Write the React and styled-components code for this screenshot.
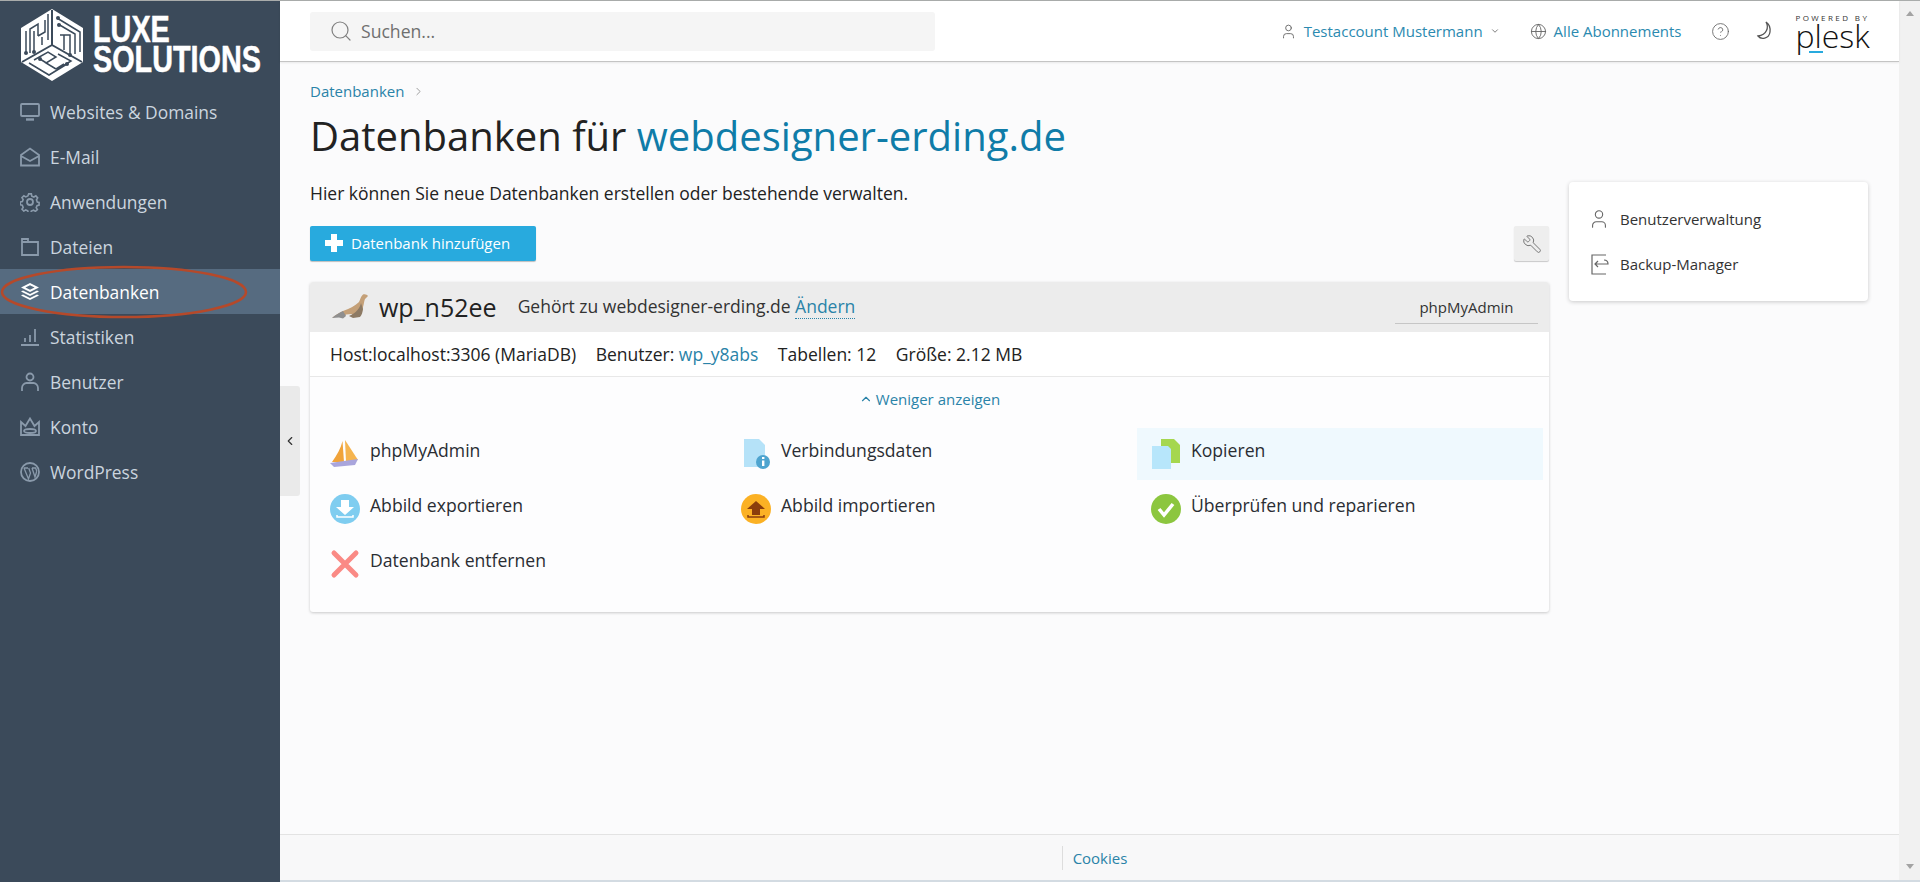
import { createGlobalStyle, styled } from 'styled-components'
import {
  ChevronDown,
  ChevronLeft,
  ChevronRight,
  ChevronUp,
  CircleHelp,
  Globe,
  Search,
  User,
  Wrench,
} from 'lucide-react'

const GlobalStyle = createGlobalStyle`
  html, body {
    margin: 0;
    height: 100%;
    overflow: hidden;
  }
  body {
    font-family: "Open Sans", "Noto Sans", sans-serif;
    color: #222;
    background: #fbfbfc;
  }
  * { box-sizing: border-box; }
`
const Page = styled.div`
  position: relative;
  display: flex;
  height: 882px;
  border-top: 1px solid #a9acab;
`
const Sidebar = styled.aside`
  width: 280px;
  flex: none;
  background: #3b4a5a;
  display: flex;
  flex-direction: column;
`
const LogoRow = styled.div`
  height: 88px;
  display: flex;
  align-items: center;
  gap: 9px;
  padding-left: 20px;
  color: #fff;
  svg {
    flex: none;
  }
`
const LogoWords = styled.div`
  font-family: "Liberation Sans", sans-serif;
  font-weight: 700;
  font-size: 36px;
  line-height: 30.5px;
  white-space: nowrap;
  transform: scaleX(0.8);
  transform-origin: left center;
  -webkit-text-stroke: 0.5px #fff;
`
const NavItem = styled.div`
  height: 45px;
  display: flex;
  align-items: center;
  gap: 10px;
  padding-left: 20px;
  font-size: 17.4px;
  color: ${(p) => (p.$active ? '#fff' : '#cbd5df')};
  background: ${(p) => (p.$active ? '#566b80' : 'transparent')};
  svg {
    color: ${(p) => (p.$active ? '#fff' : '#8a9aab')};
    flex: none;
  }
`
const Annotation = styled.svg`
  position: absolute;
  left: 0;
  top: 260px;
  pointer-events: none;
`
const Main = styled.div`
  flex: 1;
  min-width: 0;
  display: flex;
  flex-direction: column;
  position: relative;
`
const Header = styled.header`
  height: 61px;
  flex: none;
  background: #fff;
  border-bottom: 1px solid #c4c4c4;
  box-shadow: 0 1px 2px rgba(0, 0, 0, 0.08);
  display: flex;
  align-items: center;
  padding-left: 30px;
`
const SearchBox = styled.div`
  width: 625px;
  height: 39px;
  background: #f5f5f5;
  border-radius: 3px;
  display: flex;
  align-items: center;
  gap: 8px;
  padding-left: 19px;
  font-size: 17.6px;
  color: #6f6f6f;
  svg {
    color: #808080;
    flex: none;
  }
`
const HeaderRight = styled.div`
  margin-left: auto;
  display: flex;
  align-items: center;
  font-size: 15px;
  color: #2b8ab0;
  svg {
    color: #666;
    flex: none;
  }
`
const HeaderLink = styled.div`
  display: flex;
  align-items: center;
  gap: ${(p) => p.$gap || 7}px;
  margin-right: ${(p) => p.$after || 0}px;
`
const PleskBrand = styled.div`
  width: 74px;
  margin: 0 29.5px 0 22px;
  color: #111;
  display: flex;
  flex-direction: column;
  align-items: flex-start;
`
const PoweredBy = styled.span`
  font-size: 8px;
  line-height: 9px;
  letter-spacing: 2.4px;
  white-space: nowrap;
  color: #333;
`
const PleskWord = styled.span`
  position: relative;
  font-size: 32px;
  line-height: 29px;
  font-weight: 300;
  margin-top: -1px;
  &::after {
    content: '';
    position: absolute;
    left: 13px;
    bottom: -3px;
    width: 14px;
    height: 2px;
    background: #28aade;
  }
`
const Content = styled.main`
  flex: 1;
  display: flex;
  gap: 20px;
  padding: 0 30px 0 30px;
`
const ContentColumn = styled.div`
  width: 1239px;
  flex: none;
`
const Breadcrumb = styled.div`
  display: flex;
  align-items: center;
  gap: 8px;
  height: 20px;
  margin-top: 19px;
  font-size: 15px;
  color: #2a83a8;
  svg {
    color: #777;
  }
`
const Title = styled.h1`
  margin: 8.5px 0 0;
  font-size: 40px;
  line-height: 52px;
  font-weight: 400;
  color: #222;
`
const TitleLink = styled.span`
  color: #0f7ca8;
`
const Intro = styled.p`
  margin: 20.5px 0 0;
  font-size: 17.5px;
  line-height: 22px;
  color: #222;
`
const Toolbar = styled.div`
  display: flex;
  justify-content: space-between;
  margin-top: 22px;
`
const AddButton = styled.div`
  width: 226px;
  height: 35px;
  background: #28aade;
  border-radius: 2px;
  box-shadow: 0 1px 1px rgba(0, 0, 0, 0.25);
  display: flex;
  align-items: center;
  gap: 8px;
  padding: 0 0 1px 15px;
  color: #fff;
  font-size: 15px;
`
const ToolButton = styled.div`
  width: 35px;
  height: 35px;
  background: #eee;
  border-radius: 2px;
  box-shadow: 0 1px 1px rgba(0, 0, 0, 0.2);
  display: flex;
  align-items: center;
  justify-content: center;
  svg {
    color: #777;
    transform: scaleX(-1);
  }
`
const Card = styled.section`
  margin-top: 21px;
  height: 330px;
  background: #fdfdfe;
  border-radius: 3px;
  box-shadow: 0 1px 3px rgba(0, 0, 0, 0.2);
  overflow: hidden;
`
const CardHead = styled.div`
  height: 50px;
  background: #ececec;
  display: flex;
  align-items: center;
  padding-left: 22px;
`
const DbName = styled.span`
  margin-left: 11px;
  font-size: 25px;
  color: #222;
`
const Owner = styled.span`
  margin: 0 0 2px 21px;
  font-size: 17.5px;
  color: #333;
`
const ChangeLink = styled.span`
  color: #2a83a8;
  border-bottom: 1px dotted #2a83a8;
`
const AdminButton = styled.div`
  width: 143px;
  height: 33px;
  margin-left: auto;
  margin-right: 11px;
  border-bottom: 1px solid #c6c6c6;
  display: flex;
  align-items: center;
  justify-content: center;
  font-size: 15px;
  color: #333;
`
const InfoRow = styled.div`
  height: 45px;
  background: #fff;
  border-bottom: 1px solid #e8e8e8;
  display: flex;
  align-items: center;
  gap: 19.5px;
  padding-left: 20px;
  font-size: 17.5px;
  color: #222;
`
const InfoLink = styled.span`
  color: #2a83a8;
`
const ToggleRow = styled.div`
  height: 43px;
  display: flex;
  align-items: center;
  justify-content: center;
  gap: 3px;
  font-size: 15px;
  color: #2a83a8;
`
const ActionGrid = styled.div`
  display: grid;
  grid-template-columns: 411px 410px 406px;
  grid-auto-rows: 52px;
  row-gap: 3px;
  padding: 8px 0 0 6px;
`
const Action = styled.div`
  display: flex;
  align-items: center;
  gap: 10px;
  padding-left: 14px;
  background: ${(p) => (p.$hot ? '#eff9fe' : 'transparent')};
`
const ActionLabel = styled.span`
  margin-bottom: 8px;
  font-size: 17.6px;
  color: #2a2d33;
`
const ActionIcon = styled.svg`
  width: 30px;
  height: 30px;
  flex: none;
`
const SidePanel = styled.aside`
  width: 299px;
  height: 119px;
  margin-top: 120px;
  background: #fff;
  border-radius: 4px;
  box-shadow: 0 1px 4px rgba(0, 0, 0, 0.2);
  padding: 14px 19px;
`
const PanelLink = styled.div`
  height: 45px;
  display: flex;
  align-items: center;
  gap: 10px;
  font-size: 15px;
  color: #333;
  svg {
    color: #666;
    flex: none;
  }
`
const Footer = styled.footer`
  height: 48px;
  flex: none;
  background: #f8f8f9;
  border-top: 1px solid #e3e3e3;
  border-bottom: 2px solid #d3dbe2;
  display: flex;
  justify-content: center;
  align-items: center;
  font-size: 15px;
  color: #2a83a8;
`
const FooterLink = styled.span`
  border-left: 1px solid #ddd;
  line-height: 24px;
  padding-left: 10px;
  margin-left: 10px;
`
const Collapser = styled.div`
  position: absolute;
  left: 0;
  top: 385px;
  width: 20px;
  height: 110px;
  background: #eaeaea;
  border-radius: 0 3px 3px 0;
  display: flex;
  align-items: center;
  justify-content: center;
  svg {
    color: #333;
  }
`
const Scrollbar = styled.div`
  width: 21px;
  flex: none;
  background: #f1f1f1;
  border-bottom: 2px solid #d3dbe2;
  display: flex;
  flex-direction: column;
  justify-content: space-between;
  align-items: center;
  padding: 10px 0 11px;
`
const ScrollArrow = styled.div`
  width: 0;
  height: 0;
  border-left: 4px solid transparent;
  border-right: 4px solid transparent;
  border-bottom: ${(p) => (p.$down ? '0' : '5px solid #a3a3a3')};
  border-top: ${(p) => (p.$down ? '5px solid #a3a3a3' : '0')};
`

function NavIcon({ children }) {
  return (
    <svg width="20" height="20" viewBox="0 0 20 20" fill="none" stroke="currentColor" strokeWidth="1.800">
      {children}
    </svg>
  )
}

const navItems = [
  {
    label: 'Websites & Domains',
    icon: (
      <>
        <rect x="1" y="2" width="18" height="12" rx="1" />
        <path d="M6 17.500h8" strokeWidth="2.400" />
      </>
    ),
  },
  {
    label: 'E-Mail',
    icon: (
      <>
        <path d="M1 8l9-6.500 9 6.500v10.500h-18z" />
        <path d="M1 9l9 5 9-5" />
      </>
    ),
  },
  {
    label: 'Anwendungen',
    icon: (
      <>
        <circle cx="10" cy="10" r="3" />
        <path d="M8.500 1h3l.5 2.500 2.300 1 2.200-1.300 2 2.200-1.300 2.100.9 2.500 2 .5v3l-2.300.5-.9 2.300 1.300 2.100-2.200 2-2-1.300-2.500.9-.5 2h-3l-.5-2.200-2.300-1-2.100 1.300-2-2.100 1.300-2.100-1-2.300-2.200-.6v-3l2.300-.5.9-2.300-1.300-2.100 2.100-2.100 2.100 1.300 2.300-1z" transform="translate(1 1) scale(.9)" />
      </>
    ),
  },
  {
    label: 'Dateien',
    icon: <path d="M2 2h6v3h10v13h-16zM8 5h-6" />,
  },
  {
    label: 'Datenbanken',
    active: true,
    icon: (
      <g stroke="none" fill="currentColor">
        <path d="M10 1l9 4.500-9 4.500-9-4.500zM10 3.200l-4.600 2.300 4.600 2.300 4.600-2.300z" fillRule="evenodd" />
        <path d="M3 8.500l7 3.500 7-3.500 2 1-9 4.500-9-4.500z" />
        <path d="M3 12.500l7 3.500 7-3.500 2 1-9 4.500-9-4.500z" />
      </g>
    ),
  },
  {
    label: 'Statistiken',
    icon: <path d="M1 18h18M5 15v-4M10 15v-7M15 15v-13" />,
  },
  {
    label: 'Benutzer',
    icon: (
      <>
        <circle cx="10" cy="5" r="3.500" />
        <path d="M2 19v-3c0-3 2.500-5 4.500-5h7c2 0 4.500 2 4.500 5v3" />
      </>
    ),
  },
  {
    label: 'Konto',
    icon: (
      <>
        <path d="M1 5l4.500 4 4.500-7.500 4.500 7.500 4.500-4v13h-18z" />
        <ellipse cx="10" cy="14" rx="6" ry="2" />
      </>
    ),
  },
  {
    label: 'WordPress',
    icon: (
      <>
        <circle cx="10" cy="10" r="9" />
        <path d="M4 6l4.500 11 2-6-1.800-5M8 6h-4M12 6l3 9 1.500-5c.5-2-.5-3-1-4h-3.500" strokeWidth="1.300" />
      </>
    ),
  },
]

function LogoMark() {
  return (
    <svg width="64" height="72" viewBox="0 0 64 72" aria-hidden="true">
      <path d="M32 0l31 19v34l-31 19-31-19v-34z" fill="#fff" />
      <g fill="none" stroke="#3b4a5a" strokeWidth="1.500">
        <path d="M32 1v35M32 36l-30 17M32 36l30 17" strokeWidth="2" />
        <path d="M6 22v22M10 44v-24l8-5v12M14 42v-20M18 27l7-4v-12M22 36v-8M28 5v26" />
        <path d="M37 9l23 14v20M38 15l17 10v20M40 26h10v6M44 26v15M50 32v14" />
        <path d="M14 51l14-8 8 5-10 6 10 6M9 54l20 12 18-11M38 45l13 7-8 5M20 50l8 5M36 60l8-5" />
      </g>
      <g fill="#3b4a5a">
        <circle cx="6" cy="44" r="2" />
        <circle cx="14" cy="43" r="2" />
        <circle cx="38" cy="9" r="2" />
        <circle cx="39" cy="16" r="2" />
        <circle cx="50" cy="46" r="2" />
        <circle cx="20" cy="50" r="2" />
        <circle cx="47" cy="55" r="2" />
      </g>
    </svg>
  )
}

function SealIcon() {
  return (
    <svg width="36" height="26" viewBox="0 0 36 26" aria-hidden="true">
      <path d="M0 24c3-3 7-5 11-7 6-2 12-5 16-9 1-2 2-6 4-7.500 2-.8 4 0 5 1.500l-3 3c-1 2-1 5-2 8-.5 3-1 6-3 8l-7 1-1-2-6 .5-1 1.500-3-1.500z" fill="#c4a078" />
      <path d="M0 24c3-3 7-5 11-7l3 5-3 2.500-4-1z" fill="#8f8f8f" />
      <path d="M29 9c-1 5-5 10-12 13l4 2 7-1c2-2 2.500-5 3-8z" fill="#8d7a64" />
    </svg>
  )
}

function PmaIcon() {
  return (
    <ActionIcon viewBox="0 0 30 30">
      <path d="M12.500 2C11 9 7 16 2 23h12z" fill="#f0a33a" />
      <path d="M15 1l13 20-12 2z" fill="#f5b44f" />
      <path d="M0 24l28-4-3 6-21 2z" fill="#a9a5dc" />
    </ActionIcon>
  )
}

function FileInfoIcon() {
  return (
    <ActionIcon viewBox="0 0 30 30">
      <path d="M3 0h15l6 6v22H3z" fill="#b5e2f8" />
      <circle cx="22" cy="23" r="7" fill="#4ea4cf" />
      <rect x="21" y="21.500" width="2.400" height="5.500" fill="#fff" />
      <rect x="21" y="18" width="2.400" height="2" fill="#fff" />
    </ActionIcon>
  )
}

function CopyIcon() {
  return (
    <ActionIcon viewBox="0 0 30 30">
      <path d="M10 0h13l6 6v18H10z" fill="#a5d74f" />
      <path d="M1 7h16l3 3v20H1z" fill="#b7e6fb" />
    </ActionIcon>
  )
}

function ExportIcon() {
  return (
    <ActionIcon viewBox="0 0 30 30">
      <circle cx="15" cy="15" r="15" fill="#7fcdf0" />
      <path d="M11 6h8v7h5l-9 8-9-8h5z" fill="#fff" />
      <path d="M7 21v2h16v-2" stroke="#fff" strokeWidth="1.500" fill="none" />
    </ActionIcon>
  )
}

function ImportIcon() {
  return (
    <ActionIcon viewBox="0 0 30 30">
      <circle cx="15" cy="15" r="15" fill="#fbb124" />
      <path d="M15 7l9 8h-5v6h-8v-6h-5z" fill="#8a3d0c" />
      <path d="M7 21v2h16v-2" stroke="#8a3d0c" strokeWidth="1.500" fill="none" />
    </ActionIcon>
  )
}

function CheckIcon() {
  return (
    <ActionIcon viewBox="0 0 30 30">
      <circle cx="15" cy="15" r="15" fill="#8cc63f" />
      <path d="M8 15l5 6 9-11" stroke="#fff" strokeWidth="3.500" fill="none" />
    </ActionIcon>
  )
}

function RemoveIcon() {
  return (
    <ActionIcon viewBox="0 0 30 30">
      <path d="M4 4l22 22M26 4L4 26" stroke="#fa8a85" strokeWidth="5" strokeLinecap="round" fill="none" />
    </ActionIcon>
  )
}

const actions = [
  { label: 'phpMyAdmin', icon: <PmaIcon /> },
  { label: 'Verbindungsdaten', icon: <FileInfoIcon /> },
  { label: 'Kopieren', icon: <CopyIcon />, hot: true },
  { label: 'Abbild exportieren', icon: <ExportIcon /> },
  { label: 'Abbild importieren', icon: <ImportIcon /> },
  { label: 'Überprüfen und reparieren', icon: <CheckIcon /> },
  { label: 'Datenbank entfernen', icon: <RemoveIcon /> },
]

function App() {
  return (
    <Page>
      <GlobalStyle />
      <Sidebar>
        <LogoRow>
          <LogoMark />
          <LogoWords>
            LUXE
            <br />
            SOLUTIONS
          </LogoWords>
        </LogoRow>
        {navItems.map((item) => (
          <NavItem key={item.label} $active={item.active}>
            <NavIcon>{item.icon}</NavIcon>
            {item.label}
          </NavItem>
        ))}
      </Sidebar>
      <Main>
        <Header>
          <SearchBox>
            <Search size={24} strokeWidth={1.2} />
            Suchen...
          </SearchBox>
          <HeaderRight>
            <HeaderLink $after={30}>
              <User size={17} strokeWidth={1.3} />
              Testaccount Mustermann
              <ChevronDown size={10} />
            </HeaderLink>
            <HeaderLink $after={29}>
              <Globe size={17} strokeWidth={1.3} />
              Alle Abonnements
            </HeaderLink>
            <HeaderLink $after={24}>
              <CircleHelp size={19} strokeWidth={1.1} />
            </HeaderLink>
            <svg width="20" height="20" viewBox="0 0 20 20" fill="none" stroke="#555" strokeWidth="1.300">
              <path d="M12 1c3 5 1 13-8 14 3 4 11 3 12-4 .5-4-1-8-4-10z" />
            </svg>
            <PleskBrand>
              <PoweredBy>POWERED BY</PoweredBy>
              <PleskWord>plesk</PleskWord>
            </PleskBrand>
          </HeaderRight>
        </Header>
        <Content>
          <ContentColumn>
            <Breadcrumb>
              Datenbanken
              <ChevronRight size={13} strokeWidth={1.3} />
            </Breadcrumb>
            <Title>
              Datenbanken für <TitleLink>webdesigner-erding.de</TitleLink>
            </Title>
            <Intro>Hier können Sie neue Datenbanken erstellen oder bestehende verwalten.</Intro>
            <Toolbar>
              <AddButton>
                <svg width="18" height="18" viewBox="0 0 18 18" fill="#fff">
                  <path d="M6 0h6v6h6v6h-6v6h-6v-6h-6v-6h6z" />
                </svg>
                Datenbank hinzufügen
              </AddButton>
              <ToolButton>
                <Wrench size={20} strokeWidth={1.2} />
              </ToolButton>
            </Toolbar>
            <Card>
              <CardHead>
                <SealIcon />
                <DbName>wp_n52ee</DbName>
                <Owner>
                  Gehört zu webdesigner-erding.de <ChangeLink>Ändern</ChangeLink>
                </Owner>
                <AdminButton>phpMyAdmin</AdminButton>
              </CardHead>
              <InfoRow>
                <span>Host:localhost:3306 (MariaDB)</span>
                <span>
                  Benutzer: <InfoLink>wp_y8abs</InfoLink>
                </span>
                <span>Tabellen: 12</span>
                <span>Größe: 2.12 MB</span>
              </InfoRow>
              <ToggleRow>
                <ChevronUp size={14} />
                Weniger anzeigen
              </ToggleRow>
              <ActionGrid>
                {actions.map((action) => (
                  <Action key={action.label} $hot={action.hot}>
                    {action.icon}
                    <ActionLabel>{action.label}</ActionLabel>
                  </Action>
                ))}
              </ActionGrid>
            </Card>
          </ContentColumn>
          <SidePanel>
            <PanelLink>
              <User size={22} strokeWidth={1.2} />
              Benutzerverwaltung
            </PanelLink>
            <PanelLink>
              <svg width="22" height="22" viewBox="0 0 22 22" fill="none" stroke="currentColor" strokeWidth="1.200">
                <path d="M18 2H4v19h14M10 8l-3 3 3 3M7 11h13c0-3-2-4-4-4" />
              </svg>
              Backup-Manager
            </PanelLink>
          </SidePanel>
        </Content>
        <Footer>
          <FooterLink>Cookies</FooterLink>
        </Footer>
        <Collapser>
          <ChevronLeft size={14} />
        </Collapser>
      </Main>
      <Scrollbar>
        <ScrollArrow />
        <ScrollArrow $down />
      </Scrollbar>
      <Annotation width="250" height="60" viewBox="0 0 250 60">
        <ellipse cx="124" cy="31" rx="122" ry="25" fill="none" stroke="#b5492a" strokeWidth="2.500" />
      </Annotation>
    </Page>
  )
}

export default App
